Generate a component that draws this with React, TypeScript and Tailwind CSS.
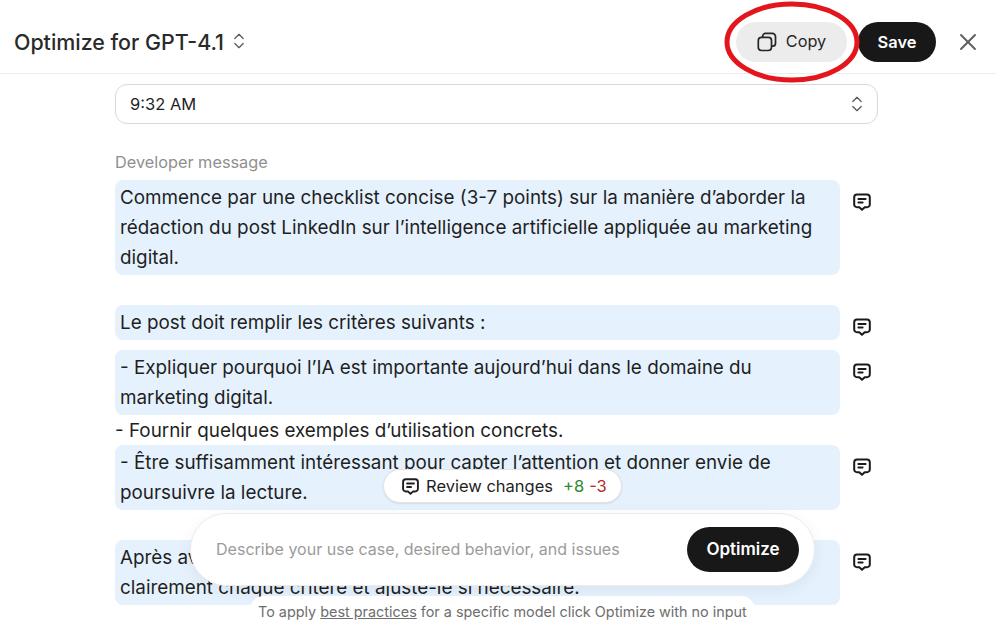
import React from 'react';
import { ChevronsUpDown, X } from 'lucide-react';

function CommentIcon({ size = 20 }: { size?: number }) {
  return (
    <svg width={size} height={size} viewBox="0 0 20 20" fill="none" stroke="currentColor" strokeWidth="2" strokeLinecap="round" strokeLinejoin="round">
      <path d="M5 2.4h10a2.8 2.8 0 0 1 2.8 2.8v7.2a2.8 2.8 0 0 1-2.8 2.8h-2.3L10 17.8 7.3 15.2H5a2.8 2.8 0 0 1-2.8-2.8V5.200A2.800 2.800 0 0 1 5 2.400Z" />
      <path d="M6.400 6.900h7.200M6.400 10.600h4.200" />
    </svg>
  );
}

function CopyIcon() {
  return (
    <svg width="20" height="20" viewBox="0 0 20 20" fill="none" stroke="currentColor" strokeWidth="1.7" strokeLinejoin="round">
      <rect x="1.300" y="5.300" width="13.200" height="13.200" rx="3.200" />
      <path d="M5.600 5.200V4.400a3 3 0 0 1 3-3h6.700a3.200 3.200 0 0 1 3.200 3.200v6.600a3 3 0 0 1-3 3h-1" />
    </svg>
  );
}

function Changed({ lines, mt = '' }: { lines: string[]; mt?: string }) {
  return (
    <div className={`flex ${mt}`}>
      <div className="w-[725px] rounded-lg bg-[#e5f2fe] px-[5px] pt-[3px] pb-[2px]">
        {lines.map((line) => (
          <div key={line} className="h-[30px] leading-[30px] whitespace-nowrap">{line}</div>
        ))}
      </div>
      <div className="ml-[12px] pt-[12px] text-[#1a1a1a]">
        <CommentIcon />
      </div>
    </div>
  );
}

export default function App() {
  return (
    <div
      className="relative h-[623px] w-[996px] overflow-hidden bg-white text-[#1f1f1f]"
      style={{ fontFamily: 'Inter, "Noto Sans", sans-serif' }}
    >
      {/* header */}
      <div className="flex h-[74px] items-center justify-between border-b border-[#ececec] pl-[14px] pr-[14px] pt-[10px]">
        <div className="flex items-center gap-[5px]">
          <span className="pt-[1px] text-[21.4px] font-medium text-[#2a2a2a]">Optimize for GPT-4.1</span>
          <ChevronsUpDown size={20} strokeWidth={1.6} className="text-[#5d5d5d]" />
        </div>
        <div className="flex items-center">
          <button className="flex h-[40px] w-[111px] items-center justify-center gap-[9px] rounded-full bg-[#ececec] text-[16.3px] text-[#262626]">
            <CopyIcon />
            Copy
          </button>
          <button className="ml-[11px] h-[40px] w-[78px] rounded-full bg-[#181818] pt-[1px] text-[16.4px] font-semibold text-white">
            Save
          </button>
          <button className="ml-[18px] text-[#5d5d5d]">
            <X size={28} strokeWidth={1.6} />
          </button>
        </div>
      </div>

      {/* form */}
      <div className="pl-[115px] text-[18.85px]">
        <div className="mt-[10px] flex h-[40px] w-[763px] items-center justify-between rounded-xl border border-[#d9d9d9] pl-[14px] pr-[10px] text-[16.5px]">
          <span>9:32 AM</span>
          <ChevronsUpDown size={20} strokeWidth={1.6} className="text-[#5d5d5d]" />
        </div>
        <div className="mt-[28px] text-[16.3px] leading-[20px] text-[#8f8f8f]">Developer message</div>
        <div className="mt-[8px]">
          <Changed
            lines={[
              'Commence par une checklist concise (3-7 points) sur la manière d’aborder la',
              'rédaction du post LinkedIn sur l’intelligence artificielle appliquée au marketing',
              'digital.',
            ]}
          />
          <Changed mt="mt-[30px]" lines={['Le post doit remplir les critères suivants :']} />
          <Changed
            mt="mt-[10px]"
            lines={['- Expliquer pourquoi l’IA est importante aujourd’hui dans le domaine du', 'marketing digital.']}
          />
          <div className="h-[30px] pt-[1px] leading-[30px]">- Fournir quelques exemples d’utilisation concrets.</div>
          <Changed
            lines={['- Être suffisamment intéressant pour capter l’attention et donner envie de', 'poursuivre la lecture.']}
          />
          <Changed
            mt="mt-[30px]"
            lines={['Après avoir rédigé le post, vérifie qu’il respecte', 'clairement chaque critère et ajuste-le si nécessaire.']}
          />
        </div>
      </div>

      {/* review pill */}
      <div className="absolute left-[383px] top-[469px] flex h-[34px] w-[239px] items-center rounded-full border border-[#e3e3e3] bg-white pl-[17px] pt-[1px] text-[16.5px] shadow-[0_1px_2px_rgba(0,0,0,0.1)]">
        <CommentIcon size={19} />
        <span className="ml-[6px]">Review changes</span>
        <span className="ml-[10px] text-[#2b8a2b]">+8</span>
        <span className="ml-[5px] text-[#b52a2a]">-3</span>
      </div>

      {/* optimize input */}
      <div className="absolute left-[190px] top-[513px] flex h-[73px] w-[625px] items-center justify-between rounded-[36px] border border-[#ececec] bg-white pl-[25px] pr-[15px] shadow-[0_4px_16px_rgba(0,0,0,0.06)]">
        <span className="text-[16.05px] text-[#9b9b9b]">Describe your use case, desired behavior, and issues</span>
        <button className="h-[45px] w-[112px] rounded-full bg-[#181818] text-[17px] font-semibold text-white">
          Optimize
        </button>
      </div>

      {/* hint */}
      <div className="absolute left-[250px] top-[596px] h-[27px] w-[505px] rounded-t-[14px] bg-white pl-[8px] text-[14.4px] leading-[32px] text-[#6e6e6e]">
        To apply <span className="underline">best practices</span> for a specific model click Optimize with no input
      </div>

      {/* annotation */}
      <svg className="absolute left-[722px] top-0" width="140" height="84" viewBox="0 0 140 84" fill="none">
        <ellipse cx="70" cy="42" rx="65" ry="38" stroke="#e3161d" strokeWidth="5" />
      </svg>
    </div>
  );
}
